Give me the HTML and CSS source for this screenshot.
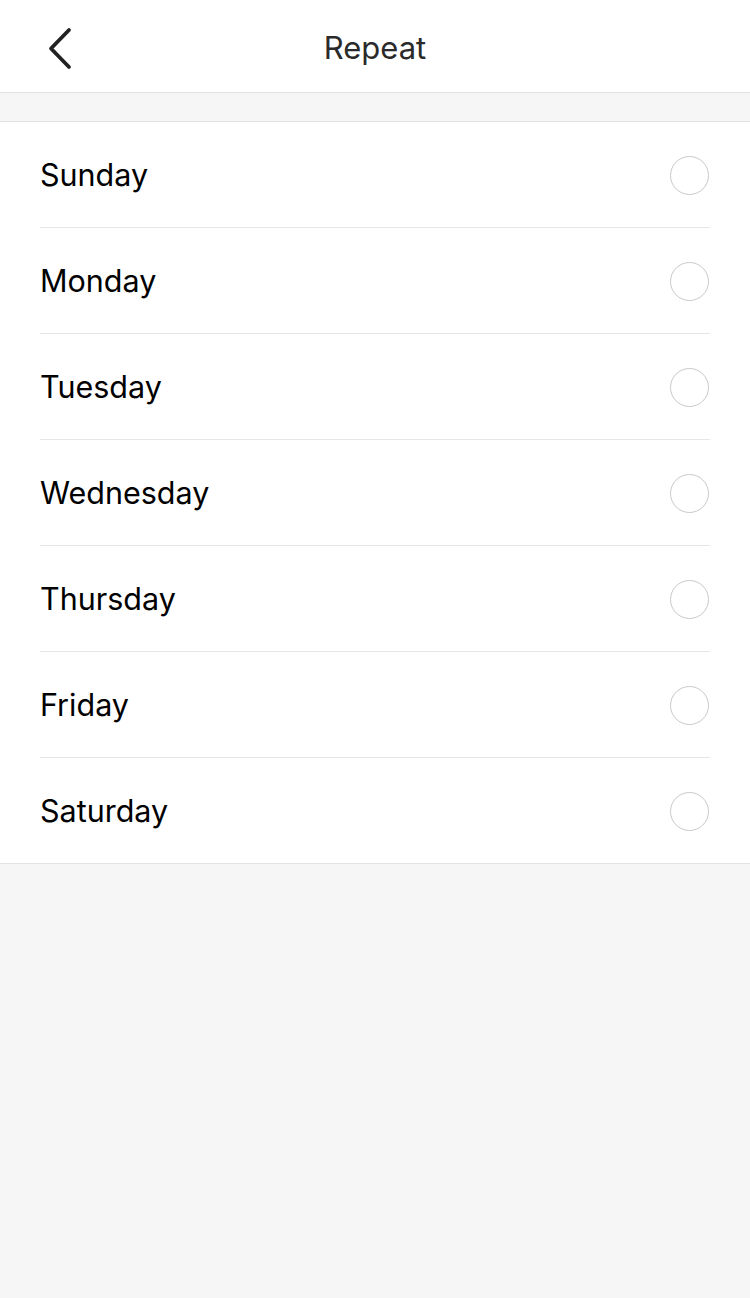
FILE: index.html
```html
<!DOCTYPE html>
<html>
<head>
<meta charset="utf-8">
<link rel="stylesheet" href="styles.css">
</head>
<body>
<header class="nav">
  <button class="back" aria-label="Back">
    <svg width="30" height="44" viewBox="0 0 30 44"><path d="M22 3 L4 21.5 L22 40" fill="none" stroke="#222" stroke-width="3.8" stroke-linecap="round" stroke-linejoin="round"/></svg>
  </button>
  <h1 class="title">Repeat</h1>
</header>
<div class="spacer"></div>
<ul class="list">
  <li class="row"><span class="label">Sunday</span><span class="radio"></span></li>
  <li class="row"><span class="label">Monday</span><span class="radio"></span></li>
  <li class="row"><span class="label">Tuesday</span><span class="radio"></span></li>
  <li class="row"><span class="label">Wednesday</span><span class="radio"></span></li>
  <li class="row"><span class="label">Thursday</span><span class="radio"></span></li>
  <li class="row"><span class="label">Friday</span><span class="radio"></span></li>
  <li class="row"><span class="label">Saturday</span><span class="radio"></span></li>
</ul>
</body>
</html>
```
FILE: styles.css
```css
html, body {
  margin: 0;
  padding: 0;
  background: #f6f6f6;
  font-family: Inter, "Liberation Sans", sans-serif;
}
.nav {
  height: 92px;
  background: #fff;
  border-bottom: 1px solid #e2e2e2;
  display: flex;
  align-items: center;
  justify-content: center;
  position: relative;
}
.back {
  position: absolute;
  left: 47px;
  top: 27px;
  border: 0;
  background: none;
  padding: 0;
  width: 30px;
  height: 44px;
}
.back svg { display: block; }
.title {
  margin: 2px 0 0;
  font-size: 31px;
  font-weight: 400;
  color: #2a2a2a;
}
.spacer {
  height: 28px;
}
.list {
  list-style: none;
  margin: 0;
  padding: 0 40px;
  background: #fff;
  border-top: 1px solid #e2e2e2;
  border-bottom: 1px solid #e2e2e2;
}
.row {
  height: 105px;
  display: flex;
  align-items: center;
  justify-content: space-between;
  border-bottom: 1px solid #e6e6e6;
}
.row:last-child {
  border-bottom: 0;
}
.label {
  font-size: 30.5px;
  color: #000;
}
.radio {
  width: 37px;
  height: 37px;
  border: 1.5px solid #c9c9c9;
  border-radius: 50%;
  margin: 2px 1px 0 0;
}
```
